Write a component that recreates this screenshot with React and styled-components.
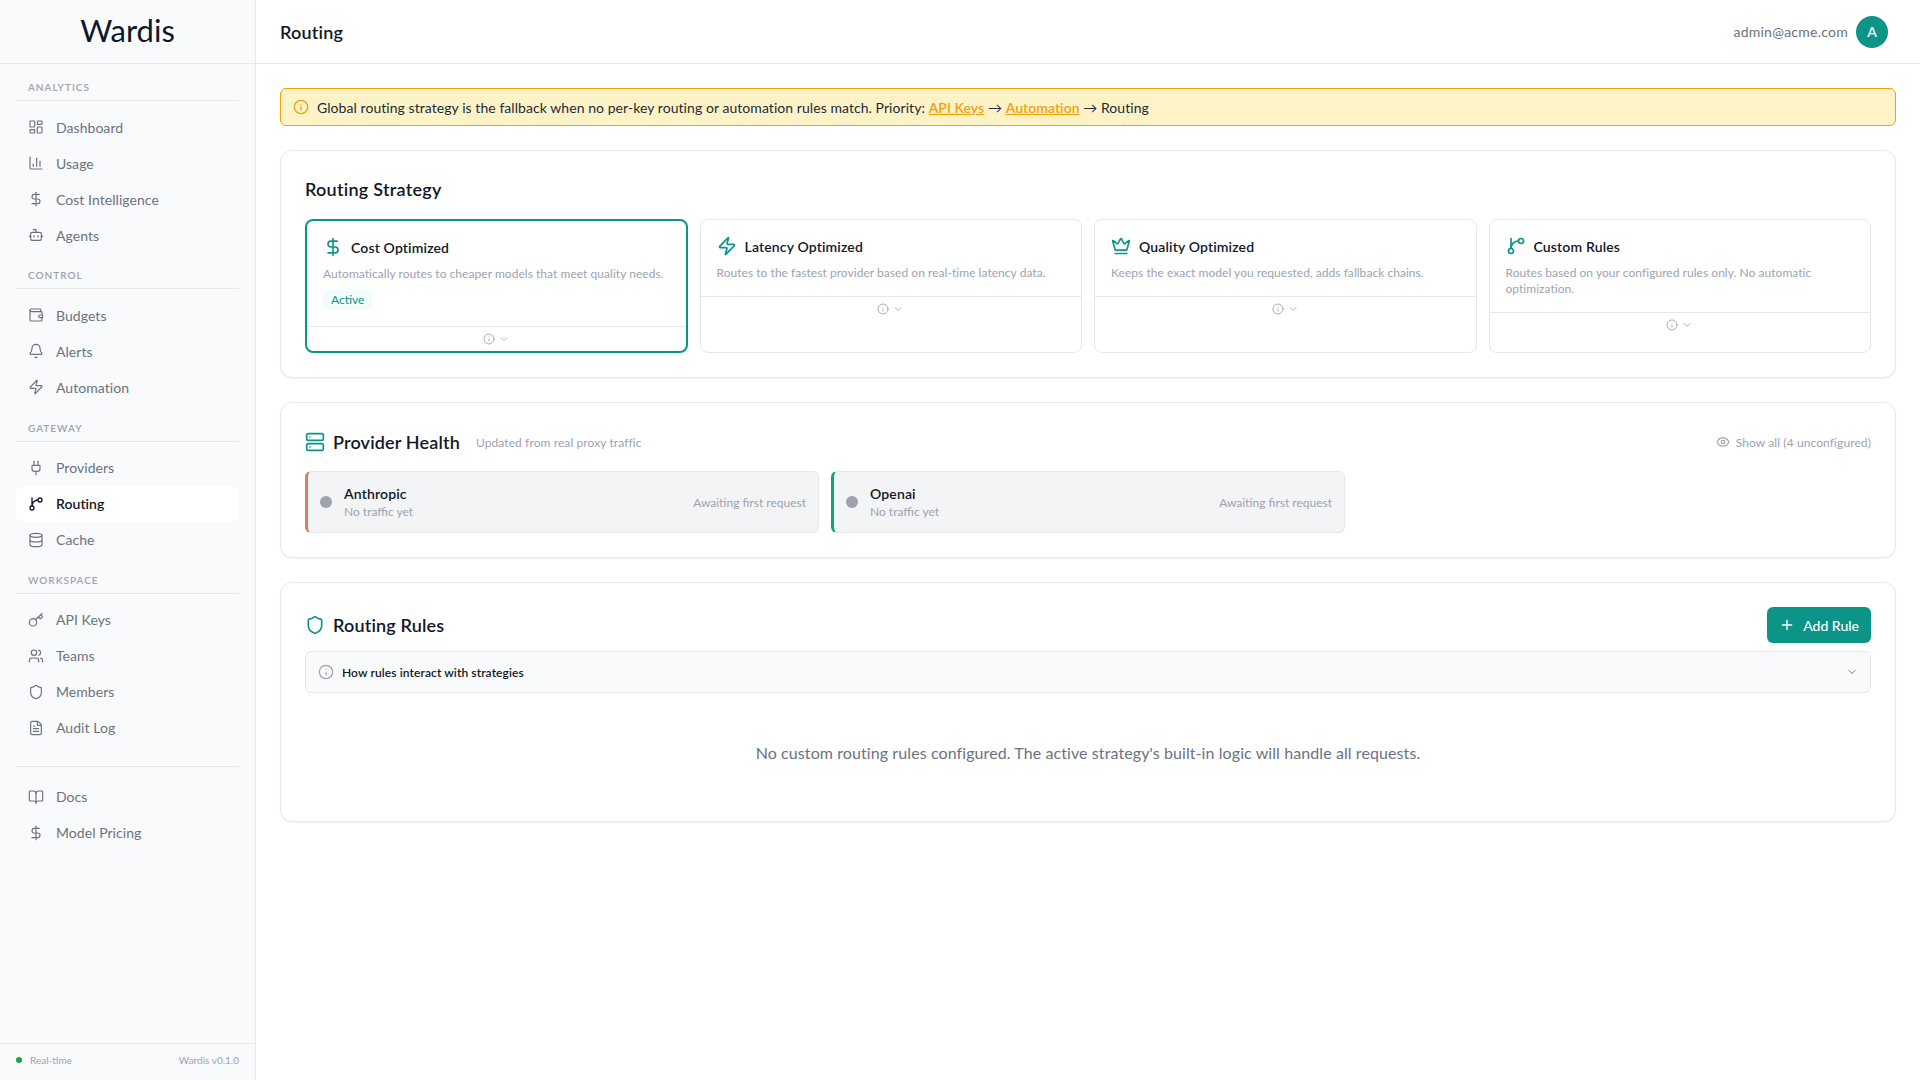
import React from "react";
import styled, { createGlobalStyle } from "styled-components";
import {
  LayoutDashboard,
  ChartColumn,
  DollarSign,
  Bot,
  Wallet,
  Bell,
  Zap,
  Plug,
  Database,
  Key,
  Users,
  Shield,
  FileText,
  BookOpen,
  Info,
  ChevronDown,
  Crown,
  Server,
  Eye,
  Plus,
} from "lucide-react";

const GlobalStyle = createGlobalStyle`
  * { box-sizing: border-box; }
  html, body { margin: 0; height: 100%; }
  body {
    background: #fff;
    color: #111827;
    font-family: "Lato", "Open Sans", sans-serif;
  }
`;

// lucide's branch icon in the shape the app ships, stem joined by the upper curve
const BranchIcon = ({ size = 16, strokeWidth = 2, color = "currentColor" }) => (
  <svg
    width={size}
    height={size}
    viewBox="0 0 24 24"
    fill="none"
    stroke={color}
    strokeWidth={strokeWidth}
    strokeLinecap="round"
    strokeLinejoin="round"
  >
    <path d="M15 6a9 9 0 0 0-9 9V3" />
    <circle cx="18" cy="6" r="3" />
    <circle cx="6" cy="18" r="3" />
  </svg>
);

const navGroups = [
  {
    label: "ANALYTICS",
    items: [
      { name: "Dashboard", icon: LayoutDashboard },
      { name: "Usage", icon: ChartColumn },
      { name: "Cost Intelligence", icon: DollarSign },
      { name: "Agents", icon: Bot },
    ],
  },
  {
    label: "CONTROL",
    items: [
      { name: "Budgets", icon: Wallet },
      { name: "Alerts", icon: Bell },
      { name: "Automation", icon: Zap },
    ],
  },
  {
    label: "GATEWAY",
    items: [
      { name: "Providers", icon: Plug },
      { name: "Routing", icon: BranchIcon, active: true },
      { name: "Cache", icon: Database },
    ],
  },
  {
    label: "WORKSPACE",
    items: [
      { name: "API Keys", icon: Key },
      { name: "Teams", icon: Users },
      { name: "Members", icon: Shield },
      { name: "Audit Log", icon: FileText },
    ],
  },
];

const strategies = [
  {
    name: "Cost Optimized",
    icon: DollarSign,
    desc: "Automatically routes to cheaper models that meet quality needs.",
    active: true,
  },
  {
    name: "Latency Optimized",
    icon: Zap,
    desc: "Routes to the fastest provider based on real-time latency data.",
  },
  {
    name: "Quality Optimized",
    icon: Crown,
    desc: "Keeps the exact model you requested, adds fallback chains.",
  },
  {
    name: "Custom Rules",
    icon: BranchIcon,
    desc: "Routes based on your configured rules only. No automatic optimization.",
  },
];

const providers = [
  { name: "Anthropic", color: "#e07a5f" },
  { name: "Openai", color: "#10a37f" },
];

const App = () => {
  return (
    <Layout>
      <GlobalStyle />
      <Sidebar>
        <Logo>Wardis</Logo>
        <Nav>
          {navGroups.map((group) => (
            <NavGroup key={group.label}>
              <NavLabel>{group.label}</NavLabel>
              {group.items.map((item) => (
                <NavItem key={item.name} $active={item.active}>
                  <item.icon size={16} strokeWidth={item.active ? 2 : 1.75} />
                  {item.name}
                </NavItem>
              ))}
            </NavGroup>
          ))}
          <NavExtra>
            <NavItem>
              <BookOpen size={16} strokeWidth={1.75} />
              Docs
            </NavItem>
            <NavItem>
              <DollarSign size={16} strokeWidth={1.75} />
              Model Pricing
            </NavItem>
          </NavExtra>
        </Nav>
        <SidebarFooter>
          <Status>
            <StatusDot />
            Real-time
          </Status>
          <span>Wardis v0.1.0</span>
        </SidebarFooter>
      </Sidebar>
      <Main>
        <Header>
          <PageTitle>Routing</PageTitle>
          <UserBox>
            <Email>admin@acme.com</Email>
            <Avatar>A</Avatar>
          </UserBox>
        </Header>
        <Content>
          <Banner>
            <Info size={16} color="#f59e0b" />
            <span>
              Global routing strategy is the fallback when no per-key routing or
              automation rules match. Priority: <BannerLink>API Keys</BannerLink>{" "}
              → <BannerLink>Automation</BannerLink> → Routing
            </span>
          </Banner>

          <Card>
            <CardTitle>Routing Strategy</CardTitle>
            <StrategyGrid>
              {strategies.map((s) => (
                <StrategyCard key={s.name} $active={s.active}>
                  <StrategyBody $active={s.active}>
                    <StrategyHead>
                      <s.icon size={20} color="#0d9488" strokeWidth={2} />
                      {s.name}
                    </StrategyHead>
                    <StrategyDesc>{s.desc}</StrategyDesc>
                    {s.active && <ActiveBadge>Active</ActiveBadge>}
                  </StrategyBody>
                  <StrategyFooter>
                    <Info size={12} strokeWidth={1.75} />
                    <ChevronDown size={12} strokeWidth={1.75} />
                  </StrategyFooter>
                </StrategyCard>
              ))}
            </StrategyGrid>
          </Card>

          <Card>
            <SectionHead $mb={14}>
              <SectionTitle>
                <Server size={20} color="#0d9488" />
                Provider Health
                <SectionHint>Updated from real proxy traffic</SectionHint>
              </SectionTitle>
              <ShowAll>
                <Eye size={14} />
                Show all (4 unconfigured)
              </ShowAll>
            </SectionHead>
            <ProviderGrid>
              {providers.map((p) => (
                <ProviderCard key={p.name} $color={p.color}>
                  <ProviderDot />
                  <ProviderInfo>
                    <ProviderName>{p.name}</ProviderName>
                    <ProviderSub>No traffic yet</ProviderSub>
                  </ProviderInfo>
                  <ProviderState>Awaiting first request</ProviderState>
                </ProviderCard>
              ))}
            </ProviderGrid>
          </Card>

          <Card>
            <SectionHead $mb={8}>
              <SectionTitle>
                <Shield size={20} color="#0d9488" />
                Routing Rules
              </SectionTitle>
              <AddButton>
                <Plus size={16} />
                Add Rule
              </AddButton>
            </SectionHead>
            <Accordion>
              <AccordionLabel>
                <Info size={16} strokeWidth={1.75} color="#9ca3af" />
                How rules interact with strategies
              </AccordionLabel>
              <ChevronDown size={12} color="#6b7280" />
            </Accordion>
            <EmptyText>
              No custom routing rules configured. The active strategy's built-in
              logic will handle all requests.
            </EmptyText>
          </Card>
        </Content>
      </Main>
    </Layout>
  );
};

const Layout = styled.div`
  display: flex;
  min-height: 1080px;
`;

const Sidebar = styled.aside`
  width: 256px;
  flex-shrink: 0;
  display: flex;
  flex-direction: column;
  background: #f9fafb;
  border-right: 1px solid #e5e7eb;
`;

const Logo = styled.div`
  height: 64px;
  flex-shrink: 0;
  display: flex;
  align-items: center;
  justify-content: center;
  padding-bottom: 3px;
  font-size: 31px;
  color: #0f172a;
  border-bottom: 1px solid #e5e7eb;
`;

const Nav = styled.nav`
  flex: 1;
  padding: 16px 16px 0;
`;

const NavGroup = styled.div`
  margin-bottom: 15.33px;
`;

const NavLabel = styled.div`
  padding: 0 12px 5px;
  margin-bottom: 8px;
  font-size: 10px;
  font-weight: 600;
  line-height: 15px;
  letter-spacing: 1px;
  color: #9ca3af;
  border-bottom: 1px solid #e5e7eb;
`;

const NavItem = styled.div`
  height: 36px;
  display: flex;
  align-items: center;
  gap: 12px;
  padding: 0 12px;
  border-radius: 8px;
  font-size: 14px;
  letter-spacing: 0.05px;
  font-weight: ${(p) => (p.$active ? 600 : 400)};
  color: ${(p) => (p.$active ? "#111827" : "#6b7280")};
  background: ${(p) => (p.$active ? "#fff" : "transparent")};
`;

const NavExtra = styled.div`
  margin-top: 20px;
  padding-top: 12px;
  border-top: 1px solid #e5e7eb;
`;

const SidebarFooter = styled.div`
  height: 37px;
  display: flex;
  align-items: center;
  justify-content: space-between;
  padding: 0 16px 5px;
  font-size: 10px;
  color: #9ca3af;
  border-top: 1px solid #e5e7eb;
`;

const Status = styled.div`
  display: flex;
  align-items: center;
  gap: 8px;
`;

const StatusDot = styled.span`
  width: 6px;
  height: 6px;
  border-radius: 50%;
  background: #16a34a;
`;

const Main = styled.main`
  flex: 1;
  min-width: 0;
`;

const Header = styled.header`
  height: 64px;
  display: flex;
  align-items: center;
  justify-content: space-between;
  padding: 0 32px 0 24px;
  border-bottom: 1px solid #e5e7eb;
`;

const PageTitle = styled.h1`
  margin: 0;
  font-size: 18px;
  font-weight: 600;
  letter-spacing: 0.2px;
  color: #111827;
`;

const UserBox = styled.div`
  display: flex;
  align-items: center;
  gap: 8px;
`;

const Email = styled.span`
  font-size: 14px;
  letter-spacing: 0.25px;
  color: #6b7280;
`;

const Avatar = styled.div`
  width: 32px;
  height: 32px;
  display: flex;
  align-items: center;
  justify-content: center;
  border-radius: 50%;
  background: #0d9488;
  color: #fff;
  font-size: 14px;
  font-weight: 600;
`;

const Content = styled.div`
  padding: 24px;
  display: flex;
  flex-direction: column;
  gap: 24px;
`;

const Banner = styled.div`
  height: 38px;
  display: flex;
  align-items: center;
  gap: 8px;
  padding: 0 12px;
  border: 1px solid #f59e0b;
  border-radius: 6px;
  background: #fef3c7;
  font-size: 14px;
  letter-spacing: 0.06px;
  color: #1f2937;
`;

const BannerLink = styled.a`
  color: #f59e0b;
  font-weight: 600;
  text-decoration: underline;
`;

const Card = styled.section`
  padding: 24px;
  border: 1px solid #e5e7eb;
  border-radius: 12px;
  background: #fff;
  box-shadow: 0 1px 2px rgba(0, 0, 0, 0.05);
`;

const CardTitle = styled.h2`
  margin: 0 0 16px;
  font-size: 18px;
  line-height: 28px;
  font-weight: 600;
  letter-spacing: 0.25px;
  color: #111827;
`;

const StrategyGrid = styled.div`
  display: grid;
  grid-template-columns: repeat(4, 1fr);
  gap: 12px;
`;

const StrategyCard = styled.div`
  min-height: 134px;
  border: ${(p) => (p.$active ? "2px solid #0d9488" : "1px solid #e5e7eb")};
  border-radius: 8px;
`;

const StrategyBody = styled.div`
  padding: 16px 16px ${(p) => (p.$active ? 16 : 15)}px;
`;

const StrategyHead = styled.div`
  display: flex;
  align-items: center;
  gap: 8px;
  height: 20px;
  margin-bottom: 9px;
  font-size: 14px;
  font-weight: 600;
  letter-spacing: 0.15px;
  color: #111827;
`;

const StrategyDesc = styled.p`
  margin: 0;
  font-size: 12px;
  line-height: 16px;
  letter-spacing: 0.04px;
  color: #9ca3af;
`;

const ActiveBadge = styled.span`
  display: block;
  width: fit-content;
  height: 20px;
  margin-top: 8px;
  padding: 0 8px;
  border-radius: 4px;
  background: #f0fdfa;
  font-size: 12px;
  line-height: 20px;
  color: #0d9488;
`;

const StrategyFooter = styled.div`
  display: flex;
  align-items: center;
  justify-content: center;
  gap: 3px;
  padding: 4px 0;
  height: 24px;
  border-top: 1px solid #e5e7eb;
  color: #9ca3af;
`;

const SectionHead = styled.div`
  display: flex;
  align-items: center;
  justify-content: space-between;
  min-height: 30px;
  margin-bottom: ${(p) => p.$mb}px;
`;

const SectionTitle = styled.h2`
  margin: 0;
  display: flex;
  align-items: center;
  gap: 8px;
  font-size: 18px;
  font-weight: 600;
  letter-spacing: 0.15px;
  color: #111827;
`;

const SectionHint = styled.span`
  margin-left: 8px;
  font-size: 12px;
  font-weight: 400;
  letter-spacing: 0.1px;
  color: #9ca3af;
`;

const ShowAll = styled.div`
  display: flex;
  align-items: center;
  gap: 6px;
  font-size: 12px;
  letter-spacing: 0.1px;
  color: #9ca3af;
`;

const ProviderGrid = styled.div`
  display: grid;
  grid-template-columns: repeat(3, 1fr);
  gap: 12px;
`;

const ProviderCard = styled.div`
  height: 62px;
  display: flex;
  align-items: center;
  padding: 0 12px;
  background: #f3f4f6;
  border: 1px solid #e5e7eb;
  border-left: 3px solid ${(p) => p.$color};
  border-radius: 6px;
`;

const ProviderDot = styled.span`
  width: 12px;
  height: 12px;
  margin-right: 12px;
  border-radius: 50%;
  background: #9ca3af;
`;

const ProviderInfo = styled.div`
  flex: 1;
`;

const ProviderName = styled.div`
  font-size: 14px;
  line-height: 20px;
  font-weight: 600;
  letter-spacing: 0.15px;
  color: #111827;
`;

const ProviderSub = styled.div`
  font-size: 12px;
  line-height: 16px;
  color: #9ca3af;
`;

const ProviderState = styled.div`
  font-size: 12px;
  color: #9ca3af;
`;

const AddButton = styled.button`
  height: 36px;
  display: flex;
  align-items: center;
  gap: 8px;
  padding: 0 12px;
  border: none;
  border-radius: 6px;
  background: #0d9488;
  color: #fff;
  font-family: inherit;
  font-size: 14px;
  font-weight: 500;
`;

const Accordion = styled.div`
  height: 42px;
  display: flex;
  align-items: center;
  justify-content: space-between;
  padding: 0 12px;
  background: #f9fafb;
  border: 1px solid #e5e7eb;
  border-radius: 6px;
`;

const AccordionLabel = styled.div`
  display: flex;
  align-items: center;
  gap: 8px;
  font-size: 12px;
  font-weight: 600;
  letter-spacing: 0.1px;
  color: #111827;
`;

const EmptyText = styled.p`
  margin: 16px 0 0;
  padding: 32px 0;
  text-align: center;
  font-size: 16px;
  line-height: 24px;
  letter-spacing: 0.09px;
  color: #6b7280;
`;

export default App;
